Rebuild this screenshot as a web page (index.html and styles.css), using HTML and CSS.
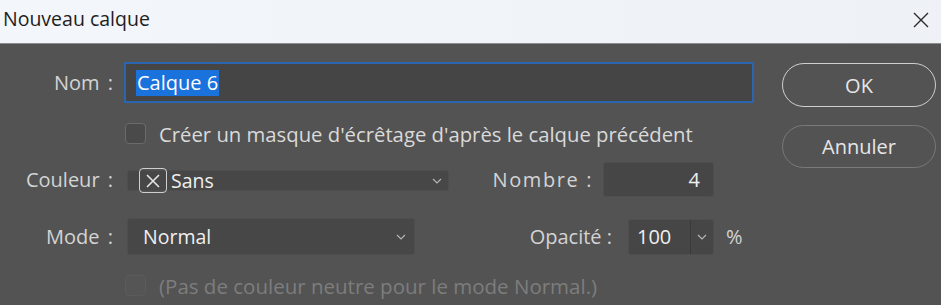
FILE: index.html
```html
<!DOCTYPE html>
<html lang="fr">
<head>
  <meta charset="UTF-8">
  <meta name="viewport" content="width=941, initial-scale=1.0">
  <title>Nouveau calque</title>
  <link rel="stylesheet" href="styles.css">
</head>
<body>
  <div class="titlebar">
    <span class="title">Nouveau calque</span>
    <svg class="close" width="18" height="18" viewBox="0 0 18 18">
      <path d="M2 2 L16 16 M16 2 L2 16" stroke="#2b2b2b" stroke-width="1.4" fill="none"/>
    </svg>
  </div>

  <div class="dialog">
    <div class="form">
      <div class="row row-name">
        <label class="label">Nom :</label>
        <div class="name-input"><span class="selected">Calque 6</span></div>
      </div>

      <div class="row row-check">
        <span class="check"></span>
        <span class="check-text">Créer un masque d'écrêtage d'après le calque précédent</span>
      </div>

      <div class="row row-color">
        <label class="label">Couleur :</label>
        <div class="select color-select">
          <span class="nocolor">
            <svg width="16" height="16" viewBox="0 0 16 16"><path d="M2 2 L14 14 M14 2 L2 14" stroke="#e4e4e4" stroke-width="1.6" fill="none"/></svg>
          </span>
          <span class="select-text">Sans</span>
          <svg class="chevron" width="10" height="6" viewBox="0 0 10 6"><path d="M1 1 L5 5 L9 1" stroke="#b5b5b5" stroke-width="1.2" fill="none"/></svg>
        </div>
        <label class="label-wide nombre">Nombre :</label>
        <div class="field number-field">4</div>
      </div>

      <div class="row row-mode">
        <label class="label">Mode :</label>
        <div class="select mode-select">
          <span class="select-text">Normal</span>
          <svg class="chevron" width="10" height="6" viewBox="0 0 10 6"><path d="M1 1 L5 5 L9 1" stroke="#b5b5b5" stroke-width="1.2" fill="none"/></svg>
        </div>
        <label class="label-wide opacite">Opacité :</label>
        <div class="field opacity-field">
          <span class="opacity-value">100</span>
          <span class="opacity-arrow">
            <svg width="10" height="6" viewBox="0 0 10 6"><path d="M1 1 L5 5 L9 1" stroke="#b5b5b5" stroke-width="1.2" fill="none"/></svg>
          </span>
        </div>
        <span class="percent">%</span>
      </div>

      <div class="row row-check disabled">
        <span class="check"></span>
        <span class="check-text">(Pas de couleur neutre pour le mode Normal.)</span>
      </div>
    </div>

    <div class="buttons">
      <button class="btn btn-ok">OK</button>
      <button class="btn btn-cancel">Annuler</button>
    </div>
  </div>
</body>
</html>
```

FILE: styles.css
```css
body {
  margin: 0;
  width: 941px;
  height: 305px;
  background: #535353;
  font-family: 'Open Sans', 'Noto Sans', Arial, sans-serif;
  overflow: hidden;
}
.titlebar {
  height: 43px;
  background: linear-gradient(to right, #f3f6fa, #eef1f6);
  border-bottom: 1px solid #8c8c8c;
  display: flex;
  align-items: center;
  justify-content: space-between;
  padding: 0 11px 0 3px;
}
.title {
  font-size: 19.5px;
  color: #1e1e1e;
  margin-top: -6px;
}
.close {
  margin-top: -4px;
}
.dialog {
  display: flex;
  padding-top: 18px;
}
.form {
  width: 754px;
}
.row {
  display: flex;
  align-items: center;
}
.label {
  width: 113px;
  text-align: right;
  font-size: 20px;
  color: #d4d4d4;
  flex-shrink: 0;
  word-spacing: 3px;
}
.row-name .name-input {
  margin-left: 11px;
  flex: 1;
  height: 41px;
  box-sizing: border-box;
  border: 2px solid #2a65b0;
  background: #454545;
  display: flex;
  align-items: center;
  padding-left: 10px;
}
.selected {
  background: #1a72dc;
  color: #ffffff;
  font-size: 20px;
  line-height: 26px;
  padding: 0 1px;
}
.row-check {
  margin-top: 20px;
  padding-left: 125px;
  height: 21px;
}
.check {
  width: 19px;
  height: 19px;
  border: 1px solid #6b6b6b;
  border-radius: 4px;
  background: #4a4a4a;
  flex-shrink: 0;
}
.check-text {
  margin-left: 13px;
  font-size: 20.3px;
  color: #dadada;
}
.disabled .check {
  border-color: #5b5b5b;
  background: #555555;
}
.disabled .check-text {
  color: #7d7d7d;
  font-size: 20.5px;
}
.row-color {
  margin-top: 18px;
  height: 35px;
}
.select {
  margin-left: 14px;
  background: #474747;
  border: 1px solid #4e4e4e;
  border-radius: 3px;
  display: flex;
  align-items: center;
  box-sizing: border-box;
}
.color-select {
  width: 322px;
  height: 21px;
  margin-top: 2px;
}
.nocolor {
  margin-left: 11px;
  width: 28px;
  height: 25px;
  box-sizing: border-box;
  border: 1.5px solid #cfcfcf;
  border-radius: 4px;
  display: flex;
  align-items: center;
  justify-content: center;
  flex-shrink: 0;
}
.select-text {
  font-size: 19.5px;
  color: #efefef;
}
.color-select .select-text {
  margin-left: 4px;
}
.chevron {
  margin-left: auto;
  margin-right: 8px;
}
.color-select .chevron {
  margin-right: 6px;
}
.label-wide {
  font-size: 20px;
  color: #d4d4d4;
  text-align: right;
  flex-shrink: 0;
}
.nombre {
  width: 144px;
  letter-spacing: 1.6px;
}
.field {
  background: #464646;
  border: 1px solid #4e4e4e;
  border-radius: 3px;
  box-sizing: border-box;
  color: #efefef;
  font-size: 20px;
}
.number-field {
  margin-left: 10px;
  width: 111px;
  height: 35px;
  display: flex;
  align-items: center;
  justify-content: flex-end;
  padding-right: 13px;
}
.row-mode {
  margin-top: 21px;
  height: 37px;
}
.mode-select {
  width: 288px;
  height: 37px;
}
.mode-select .select-text {
  margin-left: 15px;
}
.opacite {
  width: 197px;
}
.opacity-field {
  margin-left: 16px;
  width: 86px;
  height: 36px;
  display: flex;
}
.opacity-value {
  width: 62px;
  display: flex;
  align-items: center;
  padding-left: 8px;
  box-sizing: border-box;
  border-right: 1px solid #3a3a3a;
}
.opacity-arrow {
  flex: 1;
  display: flex;
  align-items: center;
  justify-content: center;
}
.percent {
  margin-left: 12px;
  font-size: 20px;
  color: #d4d4d4;
}
.buttons {
  margin-left: 28px;
  display: flex;
  flex-direction: column;
  gap: 18px;
  padding-top: 1px;
}
.btn {
  width: 154px;
  height: 44px;
  border-radius: 22px;
  background: transparent;
  font-family: 'Open Sans', 'Noto Sans', Arial, sans-serif;
  font-size: 20px;
  color: #e6e6e6;
}
.btn-ok {
  border: 1.5px solid #cfcfcf;
}
.btn-cancel {
  height: 43px;
  border: 1.5px solid #7a7a7a;
}
```
